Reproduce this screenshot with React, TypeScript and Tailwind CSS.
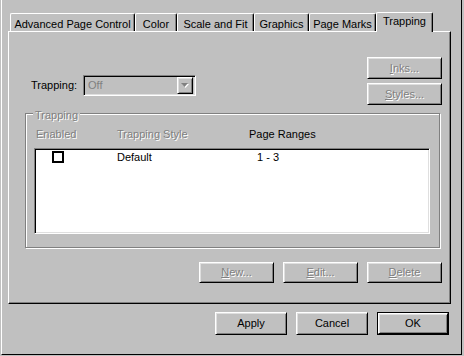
import React, { type ReactNode } from "react";

const raised =
  "border border-t-white border-l-white border-r-black border-b-black shadow-[inset_1px_1px_0_#dfdfdf,inset_-1px_-1px_0_#808080]";
const sunken =
  "border border-t-[#808080] border-l-[#808080] border-r-white border-b-white shadow-[inset_1px_1px_0_#000,inset_-1px_-1px_0_#dfdfdf]";
const dim = "text-[#808080] [text-shadow:1px_1px_0_#fff]";

const tabs: [string, number][] = [
  ["Advanced Page Control", 125],
  ["Color", 42],
  ["Scale and Fit", 77],
  ["Graphics", 55],
  ["Page Marks", 67],
  ["Trapping", 57],
];

const Btn = ({
  children,
  disabled,
  isDefault,
  className = "",
}: {
  children: ReactNode;
  disabled?: boolean;
  isDefault?: boolean;
  className?: string;
}) => {
  const inner = (
    <div
      className={`${raised} h-full w-full flex items-center justify-center leading-[13px] ${
        disabled ? dim : "text-black"
      }`}
    >
      {children}
    </div>
  );
  if (isDefault)
    return <div className={`border border-black ${className}`}>{inner}</div>;
  return <div className={className}>{inner}</div>;
};

const Tab = ({ label, width, active }: { label: string; width: number; active?: boolean }) => (
  <div
    style={{ width }}
    className={`border-l border-t border-white border-r border-r-black shadow-[inset_-1px_0_0_#808080] rounded-tl-[2px] rounded-tr-[2px] text-center leading-[13px] bg-[#c0c0c0] ${
      active ? "relative z-10 h-[20px] pt-[2px]" : "mt-[1px] h-[18px] pt-[4px]"
    }`}
  >
    {label}
  </div>
);

export default function App() {
  return (
    <div className="w-[464px] h-[356px] bg-[#c0c0c0] overflow-hidden font-['Liberation_Sans',Arial,sans-serif] text-[11px] text-black">
      <div className="ml-[1px] w-[461px] h-[355px] border-l border-l-white border-r border-r-black border-b border-b-black pt-[12px] pl-[6px]">
        {/* tab strip */}
        <div className="flex items-start h-[19px] pl-[2px]">
          {tabs.map(([label, w]) => (
            <Tab key={label} label={label} width={w} active={label === "Trapping"} />
          ))}
        </div>

        {/* panel */}
        <div className="w-[443px] h-[273px] border-l border-t border-l-white border-t-white border-r border-b border-r-black border-b-black shadow-[inset_-1px_-1px_0_#808080] pt-[25px] pr-[8px]">
          <div className="flex justify-between">
            <div className="flex items-center mt-[18px] ml-[22px] h-[21px]">
              <span className="leading-[13px] w-[52px]">Trapping:</span>
              <div className={`${sunken} w-[113px] h-[21px] bg-[#c0c0c0] flex items-center justify-between pl-[4px] pr-[2px]`}>
                <span className="text-[#808080] leading-[13px]">Off</span>
                <div className={`${raised} w-[16px] h-[17px] flex items-center justify-center`}>
                  <svg width="8" height="5" viewBox="0 0 8 5">
                    <path d="M1 1h7l-3.5 4z" fill="#fff" />
                    <path d="M0 0h7l-3.5 4z" fill="#808080" />
                  </svg>
                </div>
              </div>
            </div>
            <div className="flex flex-col gap-[4px]">
              <Btn disabled className="w-[75px] h-[22px]">
                <span>
                  <u>I</u>nks...
                </span>
              </Btn>
              <Btn disabled className="w-[75px] h-[22px]">
                <span>
                  <u>S</u>tyles...
                </span>
              </Btn>
            </div>
          </div>

          {/* group box */}
          <div className="mt-[8px] ml-[16px] w-[415px] border border-[#808080] shadow-[inset_1px_1px_0_#fff,1px_1px_0_#fff] pb-[13px]">
            <div className={`-mt-[5px] ml-[7px] w-fit px-[2px] bg-[#c0c0c0] leading-[13px] ${dim}`}>
              Trapping
            </div>
            <div className="flex mt-[6px] pl-[10px] leading-[13px]">
              <span className={`w-[81px] ${dim}`}>Enabled</span>
              <span className={`w-[132px] ${dim}`}>Trapping Style</span>
              <span>Page Ranges</span>
            </div>
            <div className={`${sunken} mt-[7px] ml-[8px] w-[396px] h-[86px] bg-white pt-[1px]`}>
              <div className="flex items-start leading-[13px]">
                <div className="w-[82px] pl-[17px] pt-[1px]">
                  <div className="w-[12px] h-[12px] border-2 border-black" />
                </div>
                <span className="w-[140px] pt-[1px]">Default</span>
                <span className="pt-[1px]">1 - 3</span>
              </div>
            </div>
          </div>

          <div className="flex justify-end gap-[9px] mt-[14px]">
            <Btn disabled className="w-[75px] h-[21px]">
              <span>
                <u>N</u>ew...
              </span>
            </Btn>
            <Btn disabled className="w-[75px] h-[21px]">
              <span>
                <u>E</u>dit...
              </span>
            </Btn>
            <Btn disabled className="w-[75px] h-[21px]">
              <span>
                <u>D</u>elete
              </span>
            </Btn>
          </div>
        </div>

        {/* dialog buttons */}
        <div className="w-[443px] flex justify-end gap-[9px] mt-[8px] pr-[2px]">
          <Btn className="w-[72px] h-[23px]">Apply</Btn>
          <Btn className="w-[72px] h-[23px]">Cancel</Btn>
          <Btn isDefault className="w-[72px] h-[23px]">
            OK
          </Btn>
        </div>
      </div>
    </div>
  );
}
